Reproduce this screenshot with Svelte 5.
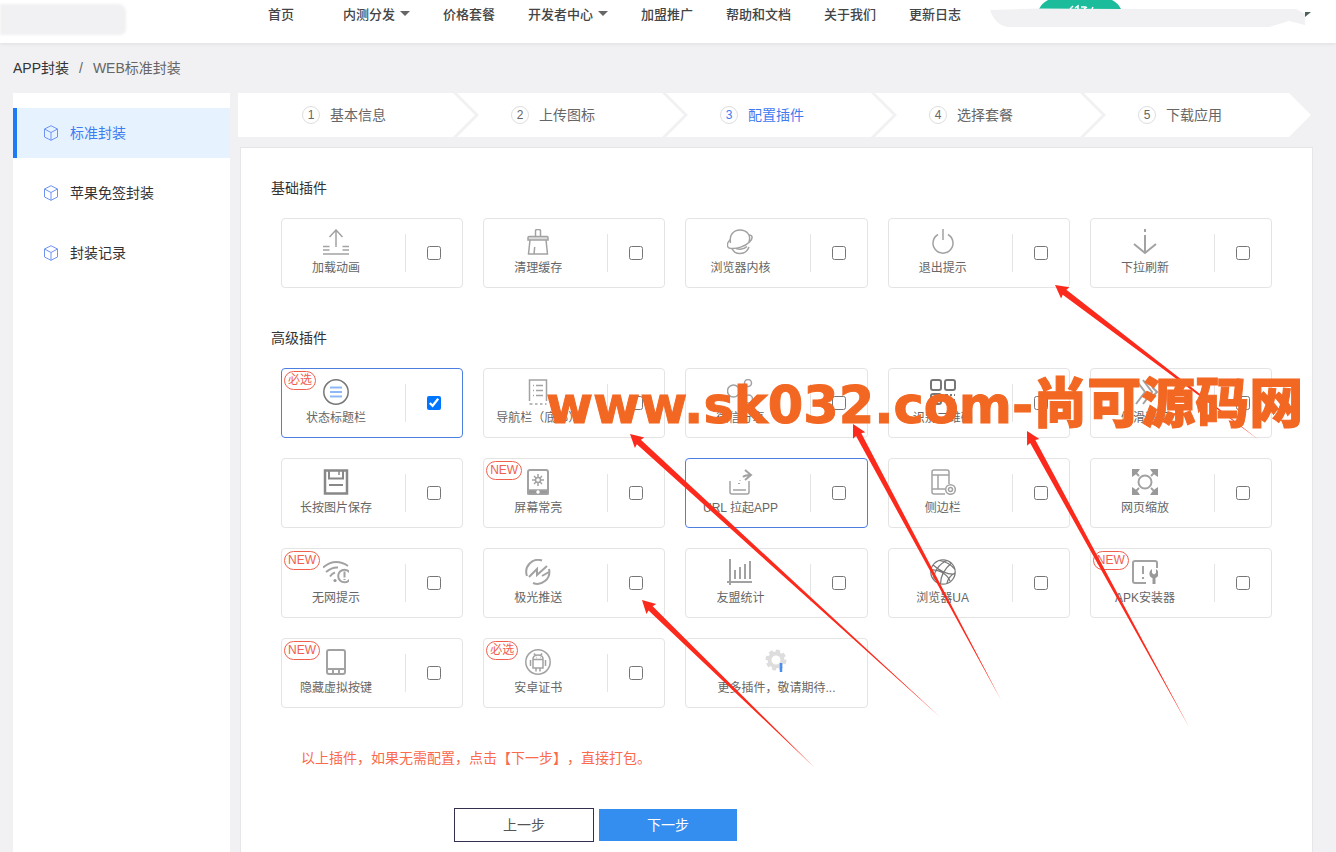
<script lang="ts">
  type Plugin = { id: string; name: string; tag?: string; active?: boolean; checked?: boolean };

  const nav = [
    { label: '首页', wide: true },
    { label: '内测分发', menu: true },
    { label: '价格套餐' },
    { label: '开发者中心', menu: true },
    { label: '加盟推广' },
    { label: '帮助和文档' },
    { label: '关于我们' },
    { label: '更新日志' }
  ];

  const side = ['标准封装', '苹果免签封装', '封装记录'];
  const steps = ['基本信息', '上传图标', '配置插件', '选择套餐', '下载应用'];

  let basic: Plugin[] = $state([
    { id: 'upload', name: '加载动画' },
    { id: 'broom', name: '清理缓存' },
    { id: 'planet', name: '浏览器内核' },
    { id: 'power', name: '退出提示' },
    { id: 'pull', name: '下拉刷新' }
  ]);

  let advanced: Plugin[] = $state([
    { id: 'title', name: '状态标题栏', tag: '必选', active: true, checked: true },
    { id: 'navbar', name: '导航栏（底部）' },
    { id: 'share', name: '微信分享' },
    { id: 'qr', name: '识别二维码' },
    { id: 'swipe', name: '侧滑返回' },
    { id: 'save', name: '长按图片保存' },
    { id: 'bright', name: '屏幕常亮', tag: 'NEW' },
    { id: 'link', name: 'URL 拉起APP', active: true },
    { id: 'sidebar', name: '侧边栏' },
    { id: 'zoom', name: '网页缩放' },
    { id: 'wifi', name: '无网提示', tag: 'NEW' },
    { id: 'push', name: '极光推送' },
    { id: 'chart', name: '友盟统计' },
    { id: 'globe', name: '浏览器UA' },
    { id: 'apk', name: 'APK安装器', tag: 'NEW' },
    { id: 'keys', name: '隐藏虚拟按键', tag: 'NEW' },
    { id: 'android', name: '安卓证书', tag: '必选' }
  ]);

  // 26x26 line icons
  const icons: Record<string, string> = {
    upload: '<path d="M13 1v17M6.500 8 13 1l6.500 7M0 17.500h6.500M0 21h6.500M19.500 17.500H26M19.500 21H26M0 25h26"/>',
    broom: '<path fill="#ddd" d="M4 7.500h18q1 0 1 1v2.500H3V8.500q0-1 1-1z"/><path d="M10.500 7V2q0-1.500 1.500-1.500h2q1.500 0 1.500 1.500v5M5 11 3.500 25H22.500L21 11M9 25l.7-7"/>',
    planet: '<path d="M3.500 14C2 6 6.500 1 13 1s11.500 5 9 12M20 17.500q-4 4-11 2M5 19.500c3 7 14 7 17-1.500"/><path d="M3.500 10.500C-.5 14-1 19 4 19.500c6 .5 14-2 18.500-6.500 4-4 3-7-.5-7"/>',
    power: '<path d="M13 0v11M8 5.500a10 10 0 1 0 10 0"/>',
    pull: '<path stroke-width="2" d="M13 0v3M13 6v18M2 15l11 9 11-9"/>',
    title: '<circle cx="13" cy="13" r="12.200" stroke="#777"/><path stroke="#8fb7f5" stroke-width="2" d="M7 8.500h12M7 13h12M7 17.500h12"/>',
    navbar: '<path d="M4.500 22V1h17v21M4.500 25h3M10 25h2.500M15 25h2.500M20 25h1.500M8 6.500h1M11 6.500h7M8 11.500h1M11 11.500h7M8 16.500h1M11 16.500h7"/>',
    share: '<circle cx="6.500" cy="12" r="6"/><circle cx="21" cy="4" r="3.500"/><circle cx="21.500" cy="20" r="4"/><path d="m12 9 6-3.500M12 14l6 3.500"/>',
    qr: '<g stroke="#777" stroke-width="2"><rect x="1" y="1" width="10" height="10" rx="2"/><rect x="15" y="1" width="10" height="10" rx="2"/><rect x="1" y="15" width="10" height="10" rx="2"/><path d="M15 16h3M20 16h2M24 16h1M15 20h2M20 21h5M16 25h3M22 25h3"/></g>',
    swipe: '<path stroke-width="2" d="M4 1l9 12-9 12M11 1l9 12-9 12M20 8l5 5-5 5"/>',
    save: '<g stroke="#888"><path stroke-width="2.500" d="M2 1.500h22v23H2z"/><path stroke-width="2" d="M6 2v7.500h14V2M6 16h14"/><path d="M16 2v4"/></g>',
    bright: '<path stroke-width="2" d="M5 1h16q2 0 2 2v20q0 2-2 2H5q-2 0-2-2V3q0-2 2-2z"/><path fill="#999" d="M3 21h20v4H3z"/><circle cx="13" cy="11" r="2.500"/><path d="M13 5v3M13 14v3M7 11h3M16 11h3M9 7l2 2M15 13l2 2M9 15l2-2M15 9l2-2"/><circle cx="13" cy="23" r="1" fill="#fff" stroke="#fff"/>',
    link: '<path d="M3 12v11q0 2 2 2h15q2 0 2-2V12M6 21h13"/><path stroke-width="2" d="M16 8q2-2 8-2M18 1l6 5-6 5M13 11v.5M12 14v1"/>',
    sidebar: '<path d="M19 15V3q0-2-2-2H4Q2 1 2 3v20q0 2 2 2h11M2 6h17M8 6v14M2 20h13"/><circle cx="20.500" cy="20.500" r="4.800"/><circle cx="20.500" cy="20.500" r="2"/>',
    zoom: '<circle cx="13" cy="13" r="6.500" stroke-width="2"/><path stroke-width="2" d="M2 2l5 5M24 2l-5 5M2 24l5-5M24 24l-5-5"/><path fill="#999" stroke="none" d="M0 0h8L6 3 3 6 0 8zM26 0h-8l2 3 3 3 3 2zM0 26h8l-2-3-3-3-3-2zM26 26h-8l2-3 3-3 3-2z"/>',
    wifi: '<g stroke-width="2"><path d="M0 8.500Q12-1.500 25 7M3 13q6-5 12-4.500M7 17.500q2-3 5-4"/><circle cx="21.500" cy="17" r="6.300"/><path d="M21.500 12.500v6M21.500 20v1"/></g><circle cx="12" cy="21.500" r="1.600" fill="#999" stroke="none"/>',
    push: '<g stroke-width="2"><path d="M2 17A12 12 0 0 1 17 1.500M24 10A12 12 0 0 1 8 24"/><path d="m4 18 8-8v6L22 7M24 13l-7 4"/></g>',
    chart: '<path stroke-width="2" d="M3 0v26M0 23h25M8 11v9M13 8v12M18 5v15M23 2v18"/>',
    globe: '<g stroke="#777" stroke-width="1.2"><circle cx="13" cy="13" r="12.200"/><path d="M1 11c8-1 16 4 19 11M3 6c7 6 14 10 22 9M9 1.500c7 1 13 5 16 9M17 1.500C9 5 3 13 4 21M21.500 4c-6 5-11 13-11 21M25 14c-4 2-7 6-8 10"/></g>',
    apk: '<path stroke-width="2" d="M14 24H3q-2 0-2-2V4q0-2 2-2h20q2 0 2 2v5M11 7v8M11 18v2"/><path fill="#999" stroke="none" d="M20 10v4l2 1.500L24 14v-4c4 3 3 8-.5 9v6h-3v-6c-3.500-1-4.500-6-.5-9z"/>',
    keys: '<path stroke-width="2" d="M6 1h14q2 0 2 2v20q0 2-2 2H6q-2 0-2-2V3q0-2 2-2zM4 20h18M10 20v5M16 20v5"/>',
    android: '<circle cx="13" cy="13" r="12.200"/><path d="M8 10.500h10V19H8zM8 10q0-4 5-4t5 4M9 4.500l1.500 2M17 4.500l-1.500 2M5.500 11v6M20.500 11v6M11 19v3.500M15 19v3.500M11 8.500h.5M15 8.500h.5"/>'
  };

  // tip and tail of every pointer
  const arrows = [
    [1055, 285, 1259, 440],
    [630, 434, 940, 717],
    [853, 424, 1001, 700],
    [1027, 431, 1189, 727],
    [642, 600, 815, 768]
  ];

  function arrowPoints([x1, y1, x2, y2]: number[]) {
    const len = Math.hypot(x2 - x1, y2 - y1);
    const ux = (x2 - x1) / len;
    const uy = (y2 - y1) / len;
    const at = (along: number, off: number) => `${x1 + ux * along - uy * off},${y1 + uy * along + ux * off}`;
    return [at(0, 0), at(13, 7), at(12, 3), at(len, 0), at(12, -3), at(13, -7)].join(' ');
  }
</script>

{#snippet card(p: Plugin)}
  <label class="card" class:active={p.active}>
    {#if p.tag}<span class="tag">{p.tag}</span>{/if}
    <span class="info">
      <svg class="icon" viewBox="0 0 26 26" aria-hidden="true">{@html icons[p.id]}</svg>
      <span class="name">{p.name}</span>
    </span>
    <span class="tick"><input type="checkbox" bind:checked={p.checked} /></span>
  </label>
{/snippet}

<div class="page">
  <header>
    <div class="logo"></div>
    <nav>
      {#each nav as item}
        <a href="#top" class:wide={item.wide}>{item.label}{#if item.menu}<i class="caret"></i>{/if}</a>
      {/each}
    </nav>
    <svg class="account" viewBox="0 0 346 43" aria-hidden="true">
      <path fill="#1abc9c" d="M49 9Q52 3 58 0H122Q128 3 131 9z" />
      <path stroke="#fff" stroke-width="1.500" fill="none" d="M80 9l3-3M85 8l3-2v3M91 7h5M94 9l3-2M102 9l1-2" />
      <path fill="#f1f1f3" d="M0 10 48 8.500 130 9H306l9 5v11l-16-4-20 6H18Q5 25 0 10z" />
      <path fill="#4d605c" d="M315 12h6l-6 5z" />
    </svg>
  </header>

  <div class="crumbs"><a href="#app">APP封装</a><span class="sep">/</span><span>WEB标准封装</span></div>

  <div class="body">
    <aside>
      {#each side as item, i}
        <a href="#side" class:current={i === 0}>
          <svg viewBox="0 0 16 16" aria-hidden="true">
            <path d="M8 .7 14.500 4v8L8 15.300 1.500 12V4zM1.500 4 8 7.500 14.500 4M8 7.500v7.800" />
          </svg>
          {item}
        </a>
      {/each}
    </aside>

    <main>
      <ol class="steps">
        {#each steps as step, i}
          <li class:on={i === 2}><span class="num">{i + 1}</span>{step}</li>
        {/each}
      </ol>

      <section class="panel">
        <h2>基础插件</h2>
        <div class="grid">
          {#each basic as p}{@render card(p)}{/each}
        </div>

        <h2>高级插件</h2>
        <div class="grid">
          {#each advanced as p}{@render card(p)}{/each}
          <div class="card">
            <span class="info more">
              <svg class="icon" viewBox="0 0 26 26" aria-hidden="true">
                <circle cx="13" cy="11" r="6.500" stroke="#ddd" stroke-width="4" />
                <circle cx="13" cy="11" r="9" stroke="#ddd" stroke-width="3" stroke-dasharray="4 3" />
                <path stroke="#4a8df0" stroke-width="2.500" d="M18 14v9" />
              </svg>
              <span class="name">更多插件，敬请期待...</span>
            </span>
          </div>
        </div>

        <p class="note">以上插件，如果无需配置，点击【下一步】，直接打包。</p>
        <div class="actions">
          <button type="button" class="prev">上一步</button>
          <button type="button" class="next">下一步</button>
        </div>
      </section>
    </main>
  </div>

  <svg class="arrows" width="1336" height="852" aria-hidden="true">
    {#each arrows as a}
      <polygon points={arrowPoints(a)} />
    {/each}
  </svg>
  <div class="watermark">www.sk032.com-<span>尚可源码网</span></div>
</div>

<style>
  :global(body) {
    margin: 0;
    background: #f1f1f3;
  }

  .page {
    position: relative;
    display: flex;
    flex-direction: column;
    min-height: 100vh;
    overflow: hidden;
    color: #666;
    font: 14px/20px "Liberation Sans", "Noto Sans CJK SC", sans-serif;
    text-spacing-trim: space-all;
  }

  a {
    color: inherit;
    text-decoration: none;
  }

  header {
    display: flex;
    height: 43px;
    background: #fff;
    box-shadow: 0 1px 4px rgba(0, 0, 0, 0.08);
  }

  .logo {
    width: 126px;
    height: 31px;
    margin-top: 4px;
    border-radius: 0 8px 6px 0;
    background: #f1f1f3;
    filter: blur(1px);
  }

  nav {
    display: flex;
    flex: 1;
    gap: 33px;
    margin-left: 142px;
    padding-top: 5px;
    color: #444;
    font-size: 13px;
    font-weight: 500;
    white-space: nowrap;
  }

  nav .wide {
    margin-right: 16px;
  }

  .caret {
    display: inline-block;
    margin: 0 0 3px 5px;
    border: 5px solid transparent;
    border-top-color: #666;
    border-bottom: 0;
  }

  .account {
    width: 346px;
    height: 43px;
  }

  .crumbs {
    padding: 15px 13px;
  }

  .crumbs a {
    color: #333;
  }

  .sep {
    margin: 0 10px;
  }

  .body {
    display: flex;
    flex: 1;
    gap: 10px;
    padding: 0 23px 0 13px;
  }

  aside {
    display: flex;
    flex: 0 0 217px;
    flex-direction: column;
    gap: 10px;
    box-sizing: border-box;
    padding-top: 15px;
    background: #fff;
  }

  aside a {
    display: flex;
    align-items: center;
    gap: 11px;
    height: 50px;
    padding-left: 26px;
    border-left: 4px solid transparent;
    color: #333;
  }

  aside svg {
    width: 16px;
    height: 16px;
    fill: none;
    stroke: #6f93f3;
  }

  aside .current {
    border-color: #1f7bf5;
    background: #e6f3ff;
    color: #3f7cf0;
  }

  main {
    display: flex;
    flex: 1;
    flex-direction: column;
    min-width: 0;
  }

  .steps {
    display: flex;
    margin: 0 2px 10px -2px;
    padding: 0;
    list-style: none;
  }

  .steps li {
    display: flex;
    flex: 1 1 auto;
    align-items: center;
    gap: 10px;
    height: 44px;
    margin-left: -18px;
    padding-left: 54px;
    background: #fff;
    clip-path: polygon(0 0, calc(100% - 22px) 0, 100% 50%, calc(100% - 22px) 100%, 0 100%, 22px 50%);
  }

  .steps li:first-child {
    margin-left: 0;
    padding-left: 64px;
    clip-path: polygon(0 0, calc(100% - 22px) 0, 100% 50%, calc(100% - 22px) 100%, 0 100%);
  }

  .steps .on {
    color: #3f7cf0;
  }

  .num {
    width: 16px;
    border: 1px solid #ddd;
    border-radius: 50%;
    font-size: 12px;
    line-height: 16px;
    text-align: center;
  }

  .panel {
    flex: 1;
    padding: 30px 40px 0;
    border: 1px solid #e6e6e9;
    border-bottom: 0;
    background: #fff;
  }

  h2 {
    margin: 0 -10px 20px;
    color: #333;
    font-size: 14px;
    font-weight: 400;
  }

  .grid {
    display: grid;
    grid-template-columns: repeat(5, minmax(0, 1fr));
    gap: 20px;
    margin-bottom: 40px;
  }

  .card {
    position: relative;
    display: flex;
    align-items: center;
    box-sizing: border-box;
    height: 70px;
    border: 1px solid #e4e4e4;
    border-radius: 4px;
  }

  .card.active {
    border-color: #4d7fe0;
  }

  .info {
    display: flex;
    flex: 1;
    flex-direction: column;
    align-items: center;
    gap: 4px;
    margin-right: 15px;
    font-size: 12px;
    line-height: 18px;
    white-space: nowrap;
  }

  .more {
    margin-right: 0;
  }

  .icon {
    width: 26px;
    height: 26px;
    fill: none;
    stroke: #a2a2a2;
    stroke-width: 1.5px;
  }

  .tick {
    display: flex;
    flex: 0 0 56px;
    align-items: center;
    justify-content: center;
    height: 38px;
    border-left: 1px solid #e4e4e4;
  }

  .tick input {
    width: 14px;
    height: 14px;
    margin: 0;
  }

  .tag {
    position: absolute;
    top: 2px;
    left: 2px;
    padding: 0 3px;
    border: 1px solid #f0604f;
    border-radius: 10px;
    color: #f0604f;
    font-size: 12px;
    line-height: 17px;
  }

  .note {
    margin: 0 20px 40px;
    color: #fa6a4b;
  }

  .actions {
    display: flex;
    align-items: center;
    gap: 5px;
    margin-left: 173px;
  }

  button {
    box-sizing: border-box;
    padding: 0;
    border: 0;
    font: inherit;
  }

  .prev {
    width: 140px;
    height: 34px;
    border: 1px solid #33304f;
    background: #fff;
    color: #555;
  }

  .next {
    width: 138px;
    height: 32px;
    background: #338ef0;
    color: #fff;
  }

  .arrows {
    position: absolute;
    top: 0;
    left: 0;
    fill: #fc2a1c;
    pointer-events: none;
  }

  .watermark {
    position: absolute;
    top: 368px;
    left: 546px;
    color: #f26722;
    font: 700 51px/64px "DejaVu Sans", sans-serif;
    white-space: nowrap;
    pointer-events: none;
    -webkit-text-stroke: 1px #f26722;
  }

  .watermark span {
    font-family: "Noto Sans CJK SC", sans-serif;
    font-size: 54px;
    font-weight: 900;
  }
</style>
